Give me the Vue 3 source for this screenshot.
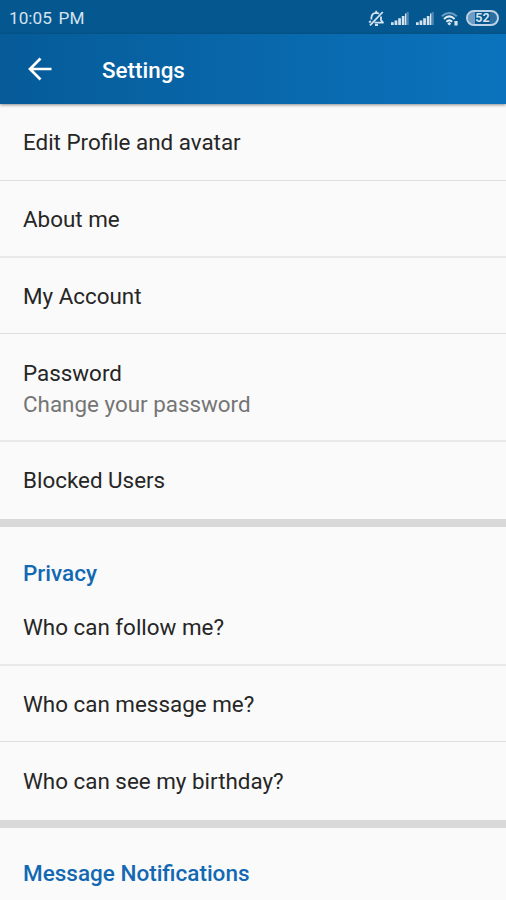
<script setup>
const account = [
  { title: 'Edit Profile and avatar', size: 'first' },
  { title: 'About me', size: 'soft' },
  { title: 'My Account' },
  { title: 'Password', note: 'Change your password', size: 'soft tall' },
  { title: 'Blocked Users', size: 'last' },
]
const privacy = [
  { title: 'Who can follow me?', size: 'soft short' },
  { title: 'Who can message me?' },
  { title: 'Who can see my birthday?', size: 'last end' },
]
</script>

<template>
  <div class="screen">
    <div class="status">
      <span class="time">10:05 PM</span>
      <svg class="bell" width="17" height="17" viewBox="0 0 17 17" fill="none" stroke="#d5e3f0" stroke-width="1.8" stroke-linejoin="round">
        <path d="M3.4 9.6V7.4Q3.8 3 8.2 2.8q1.6 0 2.8.9M13 6.6v3.6l2 2.4H6.6M1.2 12.6l1.6-1.8M7 15h3M8.2 2.8V.8M2 15.4 14.8 2" />
      </svg>
      <svg v-for="n in 2" :key="n" class="signal" width="18" height="13" viewBox="0 0 18 13">
        <path d="M0 10.3h2.7V13H0zM3.6 8.4h2.7V13H3.6zM7.2 6.2h2.7V13H7.2zM10.8 4h2.7v9h-2.7zM14 1.5h1.6V13H14z" fill="#d5e3f0" />
        <path d="M15.6 0h2.2v13h-2.2z" fill="#4d84b1" />
      </svg>
      <svg class="wifi" width="18" height="15" viewBox="0 0 18 15" fill="none" stroke-width="2">
        <path d="M.8 5.2Q8.3-1.2 15.8 5.2" stroke="#6d9bc2" />
        <path d="M3 7.9q5.3-5 10.6 0M5.4 10.7q2.9-2.6 5.8 0" stroke="#e3edf6" />
        <path d="m8.3 11 2 1.8-2 1.8-2-1.8zM13.4 10h3.2v4.4h-3.2z" fill="#d5e3f0" />
      </svg>
      <span class="battery">52</span>
    </div>
    <header class="bar">
      <svg class="back" width="24" height="24" viewBox="0 0 24 24" fill="none" stroke="#fff" stroke-width="2.7">
        <path d="M23.5 12H2.5M12.5 1.5 2 12l10.5 10.5" />
      </svg>
      <h1>Settings</h1>
    </header>
    <main>
      <section>
        <div v-for="r in account" :key="r.title" class="row" :class="r.size">
          <span>{{ r.title }}</span>
          <span v-if="r.note" class="note">{{ r.note }}</span>
        </div>
      </section>
      <section>
        <h2 class="lead">Privacy</h2>
        <div v-for="r in privacy" :key="r.title" class="row" :class="r.size">
          <span>{{ r.title }}</span>
        </div>
      </section>
      <section>
        <h2>Message Notifications</h2>
      </section>
    </main>
  </div>
</template>

<style>
body { margin: 0; }
</style>

<style scoped>
.screen {
  width: 506px;
  height: 900px;
  overflow: hidden;
  display: flex;
  flex-direction: column;
  background: #fafafa;
  font-family: Roboto, sans-serif;
}
.status {
  flex: none;
  height: 34px;
  box-sizing: border-box;
  padding: 2px 7px 0 9px;
  display: flex;
  align-items: center;
  background: #05588f;
  color: #d5e3f0;
}
.time { font-size: 17.2px; word-spacing: 2.5px; margin-right: auto; }
.bell { margin-right: 6px; }
.signal { margin-right: 7px; }
.wifi { margin-right: 7px; }
.battery {
  width: 33px;
  height: 16px;
  box-sizing: border-box;
  border: 2px solid #bed2e5;
  border-radius: 8px;
  text-align: center;
  font-size: 12.5px;
  line-height: 12px;
  font-weight: 700;
  background: linear-gradient(90deg, #6f9cc3 0 7px, #05588f 7px 22px, #2a6fa3 22px);
  background-clip: padding-box;
}
.bar {
  flex: none;
  height: 70px;
  display: flex;
  align-items: center;
  padding-left: 28px;
  background: linear-gradient(90deg, #065b98, #0b73bd);
  box-shadow: 0 1px 3px rgba(0, 0, 0, 0.45);
  z-index: 1;
}
h1 {
  margin: 1px 0 0 50px;
  font-size: 22.4px;
  font-weight: 500;
  color: #fff;
}
.row {
  height: 76px;
  box-sizing: border-box;
  padding: 2px 0 0 23px;
  border-bottom: 1px solid #dedede;
  display: flex;
  flex-direction: column;
  justify-content: center;
  font-size: 22.4px;
  line-height: 31px;
  color: #262626;
}
.first { height: 77px; padding-top: 0; }
.soft { height: 77px; border-bottom: 2px solid #e9e9e9; }
.tall { height: 108px; padding-top: 3px; }
.short { height: 75px; padding-top: 0; }
.last { height: 85px; padding-top: 0; border-bottom: 8px solid #d9d9d9; }
.end { height: 86px; }
.note { color: #757575; }
h2 {
  margin: 0;
  padding: 30px 0 0 23px;
  height: 64px;
  box-sizing: border-box;
  font-size: 22.5px;
  line-height: 31px;
  font-weight: 500;
  color: #1268b3;
}
.lead { padding-top: 31px; }
</style>
